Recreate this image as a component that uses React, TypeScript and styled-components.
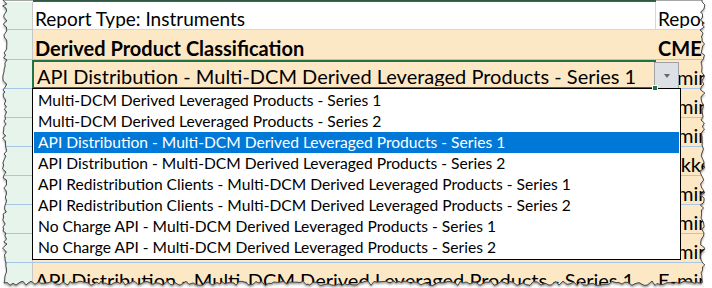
import React from 'react';
import styled, { createGlobalStyle } from 'styled-components';

const FONT = `Lato, "Open Sans", "Liberation Sans", sans-serif`;

const GlobalStyle = createGlobalStyle`
  html, body { margin: 0; padding: 0; background: #fff; }
  body { width: 712px; height: 288px; overflow: hidden; }
`;

const Page = styled.div`
  position: relative;
  width: 712px;
  height: 288px;
  overflow: hidden;
  background: #fff;
  font-family: ${FONT};
  color: #000;
`;

const Grid = styled.div`
  display: grid;
  grid-template-columns: 33px 623px 56px;
  grid-template-rows: 2px 28px 30px 29px repeat(7, 29px);
`;

const HeaderStrip = styled.div<{ $active?: boolean }>`
  background: ${(p) => (p.$active ? '#217346' : '#ffffff')};
`;

const RowHeader = styled.div`
  box-sizing: border-box;
  background: #e6f4ec;
  border-right: 1px solid #c6c6c6;
  border-bottom: 1px solid #a7c6e6;
`;

type Tone = 'white' | 'peach';

const Cell = styled.div<{ $tone?: Tone; $bold?: boolean; $divider?: boolean; $size?: number }>`
  box-sizing: border-box;
  display: flex;
  align-items: flex-end;
  padding: 0 0 1px 2px;
  overflow: hidden;
  white-space: nowrap;
  font-size: ${(p) => p.$size ?? 20}px;
  line-height: 19px;
  font-weight: ${(p) => (p.$bold ? 700 : 400)};
  background: ${(p) => (p.$tone === 'peach' ? '#fde8c6' : '#ffffff')};
  border-bottom: 1px solid ${(p) => (p.$tone === 'peach' ? '#a9c8e8' : '#d6d6d6')};
  border-right: ${(p) => (p.$divider ? '1px solid #d6d6d6' : 'none')};
`;

const SelectedCell = styled(Cell)`
  position: relative;
  overflow: visible;
  margin-left: -1px;
  padding-left: 3px;
  padding-bottom: 1px;
  border: 2px solid #217346;
  &::after {
    content: '';
    position: absolute;
    right: -4px;
    bottom: -4px;
    width: 4px;
    height: 4px;
    background: #217346;
    border: 1px solid #ffffff;
    z-index: 3;
  }
`;

const CellText = styled.span`
  display: block;
  overflow: hidden;
`;

const DropButton = styled.div`
  position: absolute;
  left: 100%;
  top: 0px;
  box-sizing: border-box;
  width: 25px;
  height: 27px;
  background: #dde0e5;
  border: 1px solid #9fa2a6;
  display: flex;
  align-items: center;
  justify-content: center;
  z-index: 2;
  &::before {
    content: '';
    width: 0;
    height: 0;
    border-left: 3.5px solid transparent;
    border-right: 3.5px solid transparent;
    border-top: 4px solid #676767;
    margin-top: 1px;
  }
`;

const ListBox = styled.div`
  position: absolute;
  left: 32px;
  top: 88px;
  width: 649px;
  height: 172px;
  box-sizing: border-box;
  border: 1px solid #000;
  background: #fff;
  padding: 1px 1px;
  z-index: 2;
`;

const ListItem = styled.div<{ $selected?: boolean }>`
  height: 21px;
  line-height: 21px;
  padding-left: 4px;
  font-size: 15.6px;
  white-space: nowrap;
  background: ${(p) => (p.$selected ? '#0078d7' : 'transparent')};
  color: ${(p) => (p.$selected ? '#ffffff' : '#000000')};
`;

const TornEdge = styled.svg`
  position: absolute;
  left: 0;
  top: 0;
  width: 712px;
  height: 288px;
  pointer-events: none;
  z-index: 5;
`;

const SERIES = 'Multi-DCM Derived Leveraged Products';
const options = [
  `Multi-DCM Derived Leveraged Products - Series 1`,
  `Multi-DCM Derived Leveraged Products - Series 2`,
  `API Distribution - ${SERIES} - Series 1`,
  `API Distribution - ${SERIES} - Series 2`,
  `API Redistribution Clients - ${SERIES} - Series 1`,
  `API Redistribution Clients - ${SERIES} - Series 2`,
  `No Charge API - ${SERIES} - Series 1`,
  `No Charge API - ${SERIES} - Series 2`,
];

// rows hidden behind the open list: column A is covered, column B peeks out
const hiddenRows = ['E-mini', 'E-mini', 'Bakken', 'E-mini', 'E-mini', 'E-mini'];

function makeRng(seed: number) {
  let s = seed;
  return () => {
    s = (s * 16807) % 2147483647;
    return (s - 1) / 2147483646;
  };
}

function buildPaperPath(): string {
  const r = makeRng(12345);
  const pts: [number, number][] = [];
  const bottom = 283;
  for (let y = 0; y <= bottom; y += 2 + Math.round(r() * 2)) {
    pts.push([2.5 + r() * 4.5, y]);
  }
  pts.push([4, bottom]);
  for (let x = 7; x <= 700; x += 2 + Math.round(r() * 2)) {
    pts.push([x, bottom - 2 + r() * 4.5]);
  }
  pts.push([702, bottom]);
  for (let y = bottom - 2; y >= 0; y -= 2 + Math.round(r() * 2)) {
    pts.push([700 + r() * 5, y]);
  }
  pts.push([702, 0]);
  return 'M' + pts.map(([x, y]) => `${x.toFixed(1)} ${y.toFixed(1)}`).join(' L') + ' Z';
}

const paper = buildPaperPath();
const outer = 'M-20 -20 H740 V320 H-20 Z';

export default function App() {
  return (
    <Page>
      <GlobalStyle />
      <Grid>
        <HeaderStrip />
        <HeaderStrip $active />
        <HeaderStrip />

        <RowHeader />
        <Cell $divider $size={19}>
          <CellText>Report Type: Instruments</CellText>
        </Cell>
        <Cell $size={19}>
          <CellText>Report Source</CellText>
        </Cell>

        <RowHeader />
        <Cell $tone="peach" $bold>
          <CellText>Derived Product Classification</CellText>
        </Cell>
        <Cell $tone="peach" $bold>
          <CellText>CME</CellText>
        </Cell>

        <RowHeader />
        <SelectedCell $tone="peach">
          <CellText>API Distribution - {SERIES} - Series 1</CellText>
          <DropButton />
        </SelectedCell>
        <Cell $tone="peach">
          <CellText>E-mini</CellText>
        </Cell>

        {hiddenRows.map((b, i) => (
          <React.Fragment key={i}>
            <RowHeader />
            <Cell $tone="peach" />
            <Cell $tone="peach">
              <CellText>{b}</CellText>
            </Cell>
          </React.Fragment>
        ))}

        <RowHeader />
        <Cell $tone="peach">
          <CellText>API Distribution - {SERIES} - Series 1</CellText>
        </Cell>
        <Cell $tone="peach">
          <CellText>E-mini</CellText>
        </Cell>
      </Grid>

      <ListBox>
        {options.map((o, i) => (
          <ListItem key={o} $selected={i === 2}>
            {o}
          </ListItem>
        ))}
      </ListBox>

      <TornEdge viewBox="0 0 712 288">
        <defs>
          <clipPath id="outside">
            <path d={outer + ' ' + paper} clipRule="evenodd" />
          </clipPath>
          <filter id="blur" x="-5%" y="-5%" width="110%" height="110%">
            <feGaussianBlur stdDeviation="1.2" />
          </filter>
        </defs>
        <g clipPath="url(#outside)">
          <rect x="-20" y="-20" width="760" height="340" fill="#ffffff" />
          <path d={paper} transform="translate(0 2)" fill="#9a9a9a" filter="url(#blur)" />
        </g>
        <path d={paper} fill="none" stroke="#3a3a3a" strokeWidth="0.9" />
      </TornEdge>
    </Page>
  );
}
